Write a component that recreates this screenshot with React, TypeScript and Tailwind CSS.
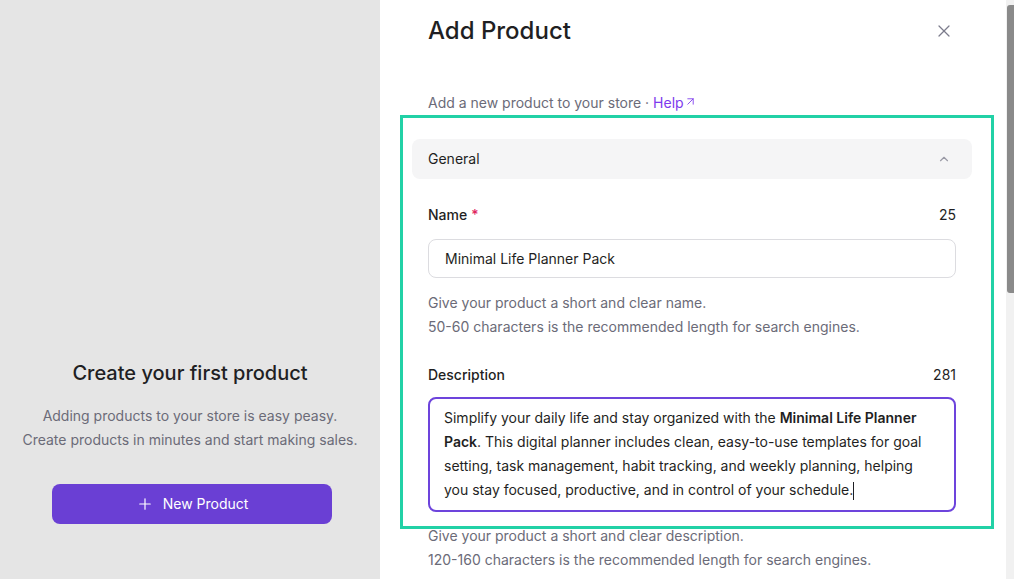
import { X, ChevronUp, ArrowUpRight, Plus } from "lucide-react";

const font = { fontFamily: "Inter, 'Noto Sans', sans-serif" };

const EmptyState = () => (
  <div className="w-[380px] h-full bg-[#e5e5e5] flex flex-col items-center pt-[359px]">
    <h2 className="text-[20px] leading-7 text-[#1f1f23] font-medium">Create your first product</h2>
    <p className="mt-[17px] text-sm leading-6 text-[#6b6b78] text-center">
      Adding products to your store is easy peasy.
      <br />
      Create products in minutes and start making sales.
    </p>
    <button className="mt-8 ml-[4px] w-[280px] h-[40px] rounded-lg bg-[#6a3fd4] text-white text-sm flex items-center justify-center gap-[9px]">
      <Plus size={18} strokeWidth={1.6} />
      <span>New Product</span>
    </button>
  </div>
);

const Field = ({ label, count, required }: { label: string; count: number; required?: boolean }) => (
  <div className="flex justify-between items-center text-sm leading-5 text-[#1f1f23]">
    <span className="font-medium">
      {label}
      {required && <span className="text-[#e0245e] ml-1">*</span>}
    </span>
    <span>{count}</span>
  </div>
);

const Panel = () => (
  <div className="relative flex-1 h-full bg-white overflow-hidden">
    <div className="pl-[32px] pr-[34px]">
      <div className="flex items-center justify-between pl-4 pr-[12px] h-[62px]">
        <h1 className="text-2xl text-[#1f1f23] font-medium">Add Product</h1>
        <button className="w-8 h-8 flex items-center justify-center text-[#7c7c8c]">
          <X size={20} strokeWidth={1.5} />
        </button>
      </div>
      <p className="pl-4 mt-[31px] text-sm leading-5 text-[#6b6b78] flex items-center">
        Add a new product to your store ·&nbsp;<span className="text-[#7c3aed]">Help</span>
        <ArrowUpRight size={13} className="text-[#7c3aed] -mt-[3px]" strokeWidth={1.6} />
      </p>
      <div className="mt-[26px] h-[40px] rounded-lg bg-[#f5f5f6] flex items-center justify-between px-4">
        <span className="text-sm text-[#1f1f23]">General</span>
        <ChevronUp size={14} className="text-[#9a9aa6] mr-[5px]" />
      </div>
      <div className="px-4 pt-[26px]">
        <Field label="Name" count={25} required />
        <div className="mt-[14px] h-[39px] rounded-lg border border-[#dcdce0] flex items-center px-4 text-sm text-[#1f1f23]">
          Minimal Life Planner Pack
        </div>
        <p className="mt-[13px] text-sm leading-6 text-[#6b6b78]">
          Give your product a short and clear name.
          <br />
          50-60 characters is the recommended length for search engines.
        </p>
        <div className="mt-[26px]">
          <Field label="Description" count={281} />
        </div>
        <div className="mt-[12px] rounded-lg border-2 border-[#6d44dc] px-[14px] pt-[7px] pb-[8px] text-sm leading-6 text-[#1f1f23]">
          Simplify your daily life and stay organized with the <b className="font-semibold">Minimal Life Planner Pack</b>. This digital
          planner includes clean, easy-to-use templates for goal setting, task management, habit tracking, and weekly planning,
          helping you stay focused, productive, and in control of your schedule.
          <span className="inline-block w-px h-[18px] bg-[#1f1f23] align-middle" />
        </div>
        <p className="mt-[12px] text-sm leading-6 text-[#6b6b78]">
          Give your product a short and clear description.
          <br />
          120-160 characters is the recommended length for search engines.
        </p>
      </div>
    </div>
    <div className="absolute left-[20px] top-[115px] w-[594px] h-[414px] border-[3px] border-[#22d1a6] pointer-events-none" />
  </div>
);

const Scrollbar = () => (
  <div className="w-[8px] h-full bg-[#f1f1f1] flex flex-col pt-[5px]">
    <div className="w-[7px] ml-[1px] h-[288px] rounded-l-[3px] bg-[#8a8a8a]" />
  </div>
);

const App = () => {
  return (
    <div className="w-[1014px] h-[579px] flex overflow-hidden" style={font}>
      <EmptyState />
      <Panel />
      <Scrollbar />
    </div>
  );
};

export default App;
